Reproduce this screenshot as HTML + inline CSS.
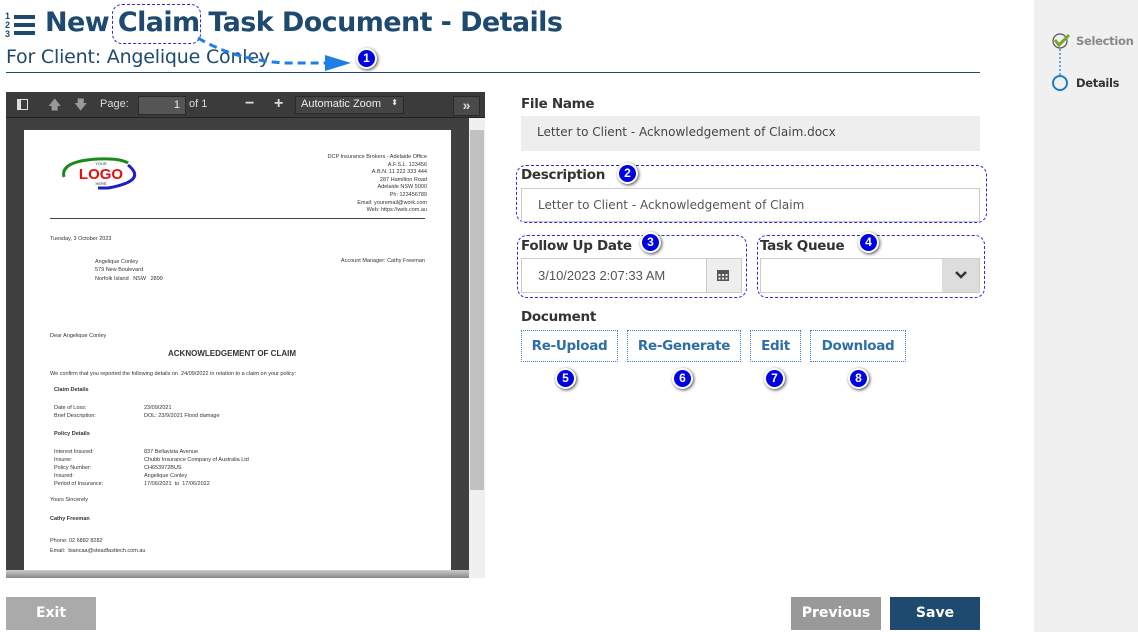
<!DOCTYPE html>
<html><head><meta charset="utf-8"><style>
*{box-sizing:border-box;margin:0;padding:0}
body{width:1138px;height:632px;background:#fff;font-family:"DejaVu Sans","Liberation Sans",sans-serif;position:relative;overflow:hidden;color:#333}
.abs{position:absolute}
.title{left:45px;top:7px;font-size:27px;font-weight:bold;color:#1d4a6e;letter-spacing:-0.6px;white-space:nowrap}
.sub{left:6px;top:46px;font-size:19px;color:#1d4a6e;letter-spacing:-0.2px}
.hr{left:6px;top:72px;width:974px;height:1px;background:#1d4a6e}
.side{left:1034px;top:0;width:104px;height:632px;background:#f0f0f0}
.badge{width:21px;height:21px;border-radius:50%;background:#0000e0;border:2px solid #fff;box-shadow:1px 1px 3px rgba(0,0,0,.7);color:#fff;font:bold 12px "Liberation Sans",sans-serif;text-align:center;line-height:17px}
.lbl{font-size:13.5px;font-weight:bold;color:#333;letter-spacing:-0.3px}
.inp{border:1px solid #ccc;background:#fff;font-size:12px;color:#555;padding-left:16px}
.dash{border:1.5px dashed #2a2ae0;border-radius:10px}
.btn{border:1px dotted #3a7fc0;color:#2f6fa8;font-weight:bold;font-size:13.5px;letter-spacing:-0.3px;text-align:center;line-height:30px;height:32px}
.doc{font-family:"Liberation Sans",sans-serif;font-size:5.5px;color:#333;white-space:nowrap}
</style></head><body>
<div class="abs" style="left:5px;top:12px;font:bold 9px 'Liberation Sans';color:#1d4a6e;line-height:9px">1<br>2<br>3</div>
<div class="abs" style="left:14px;top:15px;width:21px;height:4px;background:#1d4a6e;box-shadow:0 8px 0 #1d4a6e,0 16px 0 #1d4a6e"></div>
<div class="abs title">New Claim Task Document - Details</div>
<div class="abs dash" style="left:112px;top:4px;width:89px;height:40px"></div>
<div class="abs sub">For Client: Angelique Conley</div>
<svg class="abs" style="left:195px;top:35px" width="160" height="40"><path d="M3 3 Q40 25 90 28 L140 28" stroke="#1e7ee8" stroke-width="3" stroke-dasharray="8 5" fill="none"/><path d="M130 20 L156 28 L130 36 Z" fill="#1e7ee8"/></svg>
<div class="abs badge" style="left:356px;top:48px">1</div>
<div class="abs hr"></div>

<!-- viewer -->
<div class="abs" style="left:6px;top:92px;width:479px;height:486px;background:#404040"></div>
<div class="abs" style="left:6px;top:92px;width:479px;height:26px;background:#3b3b3b;border-bottom:1px solid #222"></div>
<div class="abs" style="left:17px;top:99px;width:11px;height:11px;border:1.5px solid #ddd;border-left-width:4px"></div>
<div class="abs" style="left:48px;top:96px;color:#999;font-size:13px">🡅</div>
<div class="abs" style="left:74px;top:96px;color:#999;font-size:13px">🡇</div>
<div class="abs" style="left:100px;top:98px;color:#ddd;font:11px 'Liberation Sans'">Page:</div>
<div class="abs" style="left:138px;top:96px;width:48px;height:19px;background:#555;border:1px solid #2a2a2a;color:#eee;font:11px 'Liberation Sans';text-align:right;padding:2px 5px">1</div>
<div class="abs" style="left:189px;top:98px;color:#ddd;font:11px 'Liberation Sans'">of 1</div>
<div class="abs" style="left:245px;top:95px;color:#ddd;font:bold 16px 'Liberation Sans'">−</div>
<div class="abs" style="left:274px;top:95px;color:#ddd;font:bold 16px 'Liberation Sans'">+</div>
<div class="abs" style="left:295px;top:96px;width:109px;height:18px;background:#444;border:1px solid #2a2a2a;color:#eee;font:11px 'Liberation Sans';padding:1px 5px">Automatic Zoom <span style="float:right;font-size:8px">⬍</span></div>
<div class="abs" style="left:453px;top:96px;width:27px;height:20px;background:#4a4a4a;border:1px solid #2a2a2a;color:#ddd;font:bold 14px 'Liberation Sans';text-align:center;line-height:17px">»</div>
<div class="abs" style="left:469px;top:118px;width:16px;height:460px;background:#f0f0f0"></div>
<div class="abs" style="left:470px;top:130px;width:14px;height:360px;background:#c1c1c1"></div>
<div class="abs" style="left:6px;top:570px;width:463px;height:8px;background:linear-gradient(#ccc,#888)"></div>

<div class="abs" style="left:24px;top:130px;width:427px;height:440px;background:#fff"></div>
<div class="abs" style="left:58px;top:155px;width:86px;height:36px">
<svg width="86" height="36"><path d="M6 22 Q2 6 40 4 Q62 3 70 8" stroke="#1a8a1a" stroke-width="3" fill="none"/><path d="M70 10 Q90 26 50 33 L40 33" stroke="#2020c0" stroke-width="3" fill="none"/><text x="43" y="24" text-anchor="middle" font-family="Liberation Sans" font-weight="bold" font-size="15" fill="#e01010">LOGO</text><text x="43" y="10" text-anchor="middle" font-family="Liberation Sans" font-size="4" fill="#333">YOUR</text><text x="43" y="30" text-anchor="middle" font-family="Liberation Sans" font-size="4" fill="#333">HERE</text></svg></div>
<div class="abs doc" style="right:711px;top:154px;text-align:right;line-height:7.6px">DCP Insurance Brokers - Adelaide Office<br>A.F.S.L. 123456<br>A.B.N. 11 222 333 444<br>287 Hamilton Road<br>Adelaide NSW 5000<br>Ph: 123456789<br>Email: youremail@work.com<br>Web: https://web.com.au</div>
<div class="abs" style="left:50px;top:218px;width:375px;height:1px;background:#444"></div>
<div class="abs doc" style="left:50px;top:236px">Tuesday, 3 October 2023</div>
<div class="abs doc" style="left:95px;top:258px;line-height:8.3px">Angelique Conley<br>579 New Boulevard<br>Norfolk Island &nbsp; NSW &nbsp; 2899</div>
<div class="abs doc" style="right:713px;top:258px">Account Manager: Cathy Freeman</div>
<div class="abs doc" style="left:50px;top:333px">Dear Angelique Conley</div>
<div class="abs doc" style="left:168px;top:349px;font-size:8px;font-weight:bold">ACKNOWLEDGEMENT OF CLAIM</div>
<div class="abs doc" style="left:50px;top:371px">We confirm that you reported the following details on &nbsp;24/09/2022 in relation to a claim on your policy:</div>
<div class="abs doc" style="left:54px;top:387px;font-weight:bold">Claim Details</div>
<div class="abs doc" style="left:54px;top:405px;line-height:7.5px">Date of Loss:<br>Brief Description:</div>
<div class="abs doc" style="left:144px;top:405px;line-height:7.5px">23/09/2021<br>DOL: 23/9/2021 Flood damage</div>
<div class="abs doc" style="left:54px;top:431px;font-weight:bold">Policy Details</div>
<div class="abs doc" style="left:54px;top:448px;line-height:8px">Interest Insured:<br>Insurer:<br>Policy Number:<br>Insured:<br>Period of Insurance:</div>
<div class="abs doc" style="left:144px;top:448px;line-height:8px">837 Bellavista Avenue<br>Chubb Insurance Company of Australia Ltd<br>CH653972BUS<br>Angelique Conley<br>17/06/2021 &nbsp;to &nbsp;17/06/2022</div>
<div class="abs doc" style="left:50px;top:497px">Yours Sincerely</div>
<div class="abs doc" style="left:50px;top:516px;font-weight:bold">Cathy Freeman</div>
<div class="abs doc" style="left:50px;top:536px;line-height:10px">Phone: 02 6882 8282<br>Email: &nbsp;biancaa@steadfasttech.com.au</div>

<!-- form -->
<div class="abs lbl" style="left:521px;top:96px">File Name</div>
<div class="abs" style="left:521px;top:116px;width:459px;height:35px;background:#eee;font-size:12px;color:#444;padding:9px 16px">Letter to Client - Acknowledgement of Claim.docx</div>
<div class="abs dash" style="left:516px;top:165px;width:471px;height:58px"></div>
<div class="abs lbl" style="left:521px;top:167px">Description</div>
<div class="abs badge" style="left:617px;top:163px">2</div>
<div class="abs inp" style="left:521px;top:188px;width:459px;height:34px;line-height:32px">Letter to Client - Acknowledgement of Claim</div>

<div class="abs dash" style="left:517px;top:235px;width:230px;height:63px"></div>
<div class="abs lbl" style="left:521px;top:238px">Follow Up Date</div>
<div class="abs badge" style="left:640px;top:232px">3</div>
<div class="abs inp" style="left:521px;top:258px;width:221px;height:35px;line-height:33px;font-family:'Liberation Sans';font-size:13px">3/10/2023 2:07:33 AM</div>
<div class="abs" style="left:706px;top:259px;width:35px;height:33px;background:#eee;border-left:1px solid #ccc"></div>
<svg class="abs" style="left:716px;top:268px" width="14" height="14"><rect x="1" y="2" width="12" height="11" fill="#555"/><g fill="#eee"><rect x="2.5" y="6" width="2" height="2"/><rect x="6" y="6" width="2" height="2"/><rect x="9.5" y="6" width="2" height="2"/><rect x="2.5" y="9.5" width="2" height="2"/><rect x="6" y="9.5" width="2" height="2"/><rect x="9.5" y="9.5" width="2" height="2"/></g></svg>

<div class="abs dash" style="left:757px;top:235px;width:228px;height:63px"></div>
<div class="abs lbl" style="left:760px;top:238px">Task Queue</div>
<div class="abs badge" style="left:858px;top:232px">4</div>
<div class="abs inp" style="left:760px;top:258px;width:220px;height:35px"></div>
<div class="abs" style="left:942px;top:259px;width:37px;height:33px;background:#ddd"></div>
<svg class="abs" style="left:954px;top:270px" width="14" height="10"><path d="M2 2 L7 7 L12 2" stroke="#333" stroke-width="2.5" fill="none"/></svg>

<div class="abs lbl" style="left:521px;top:309px">Document</div>
<div class="abs btn" style="left:521px;top:330px;width:97px">Re-Upload</div>
<div class="abs btn" style="left:627px;top:330px;width:114px">Re-Generate</div>
<div class="abs btn" style="left:750px;top:330px;width:51px">Edit</div>
<div class="abs btn" style="left:810px;top:330px;width:96px">Download</div>
<div class="abs badge" style="left:555px;top:368px">5</div>
<div class="abs badge" style="left:672px;top:368px">6</div>
<div class="abs badge" style="left:764px;top:368px">7</div>
<div class="abs badge" style="left:848px;top:368px">8</div>

<div class="abs" style="left:6px;top:597px;width:90px;height:33px;background:#aaa;color:#fff;font-weight:bold;font-size:14px;text-align:center;line-height:33px">Exit</div>
<div class="abs" style="left:791px;top:597px;width:90px;height:33px;background:#999;color:#fff;font-weight:bold;font-size:14px;text-align:center;line-height:33px">Previous</div>
<div class="abs" style="left:890px;top:597px;width:90px;height:33px;background:#1d4a6e;color:#fff;font-weight:bold;font-size:14px;text-align:center;line-height:33px">Save</div>

<!-- sidebar -->
<div class="abs side"></div>
<svg class="abs" style="left:1050px;top:31px" width="24" height="62"><circle cx="10" cy="10" r="7" fill="none" stroke="#555" stroke-width="1.2"/><path d="M5 9 L9 14 L19 4" stroke="#7aa32a" stroke-width="3" fill="none"/><line x1="10" y1="18" x2="10" y2="44" stroke="#3a8fd0" stroke-width="1.5" stroke-dasharray="2 2"/><circle cx="10" cy="52" r="7" fill="none" stroke="#1a7cc8" stroke-width="2"/></svg>
<div class="abs" style="left:1076px;top:34px;font-size:11.5px;font-weight:bold;color:#888;letter-spacing:-0.3px">Selection</div>
<div class="abs" style="left:1076px;top:76px;font-size:11.5px;font-weight:bold;color:#333;letter-spacing:-0.3px">Details</div>
</body></html>
